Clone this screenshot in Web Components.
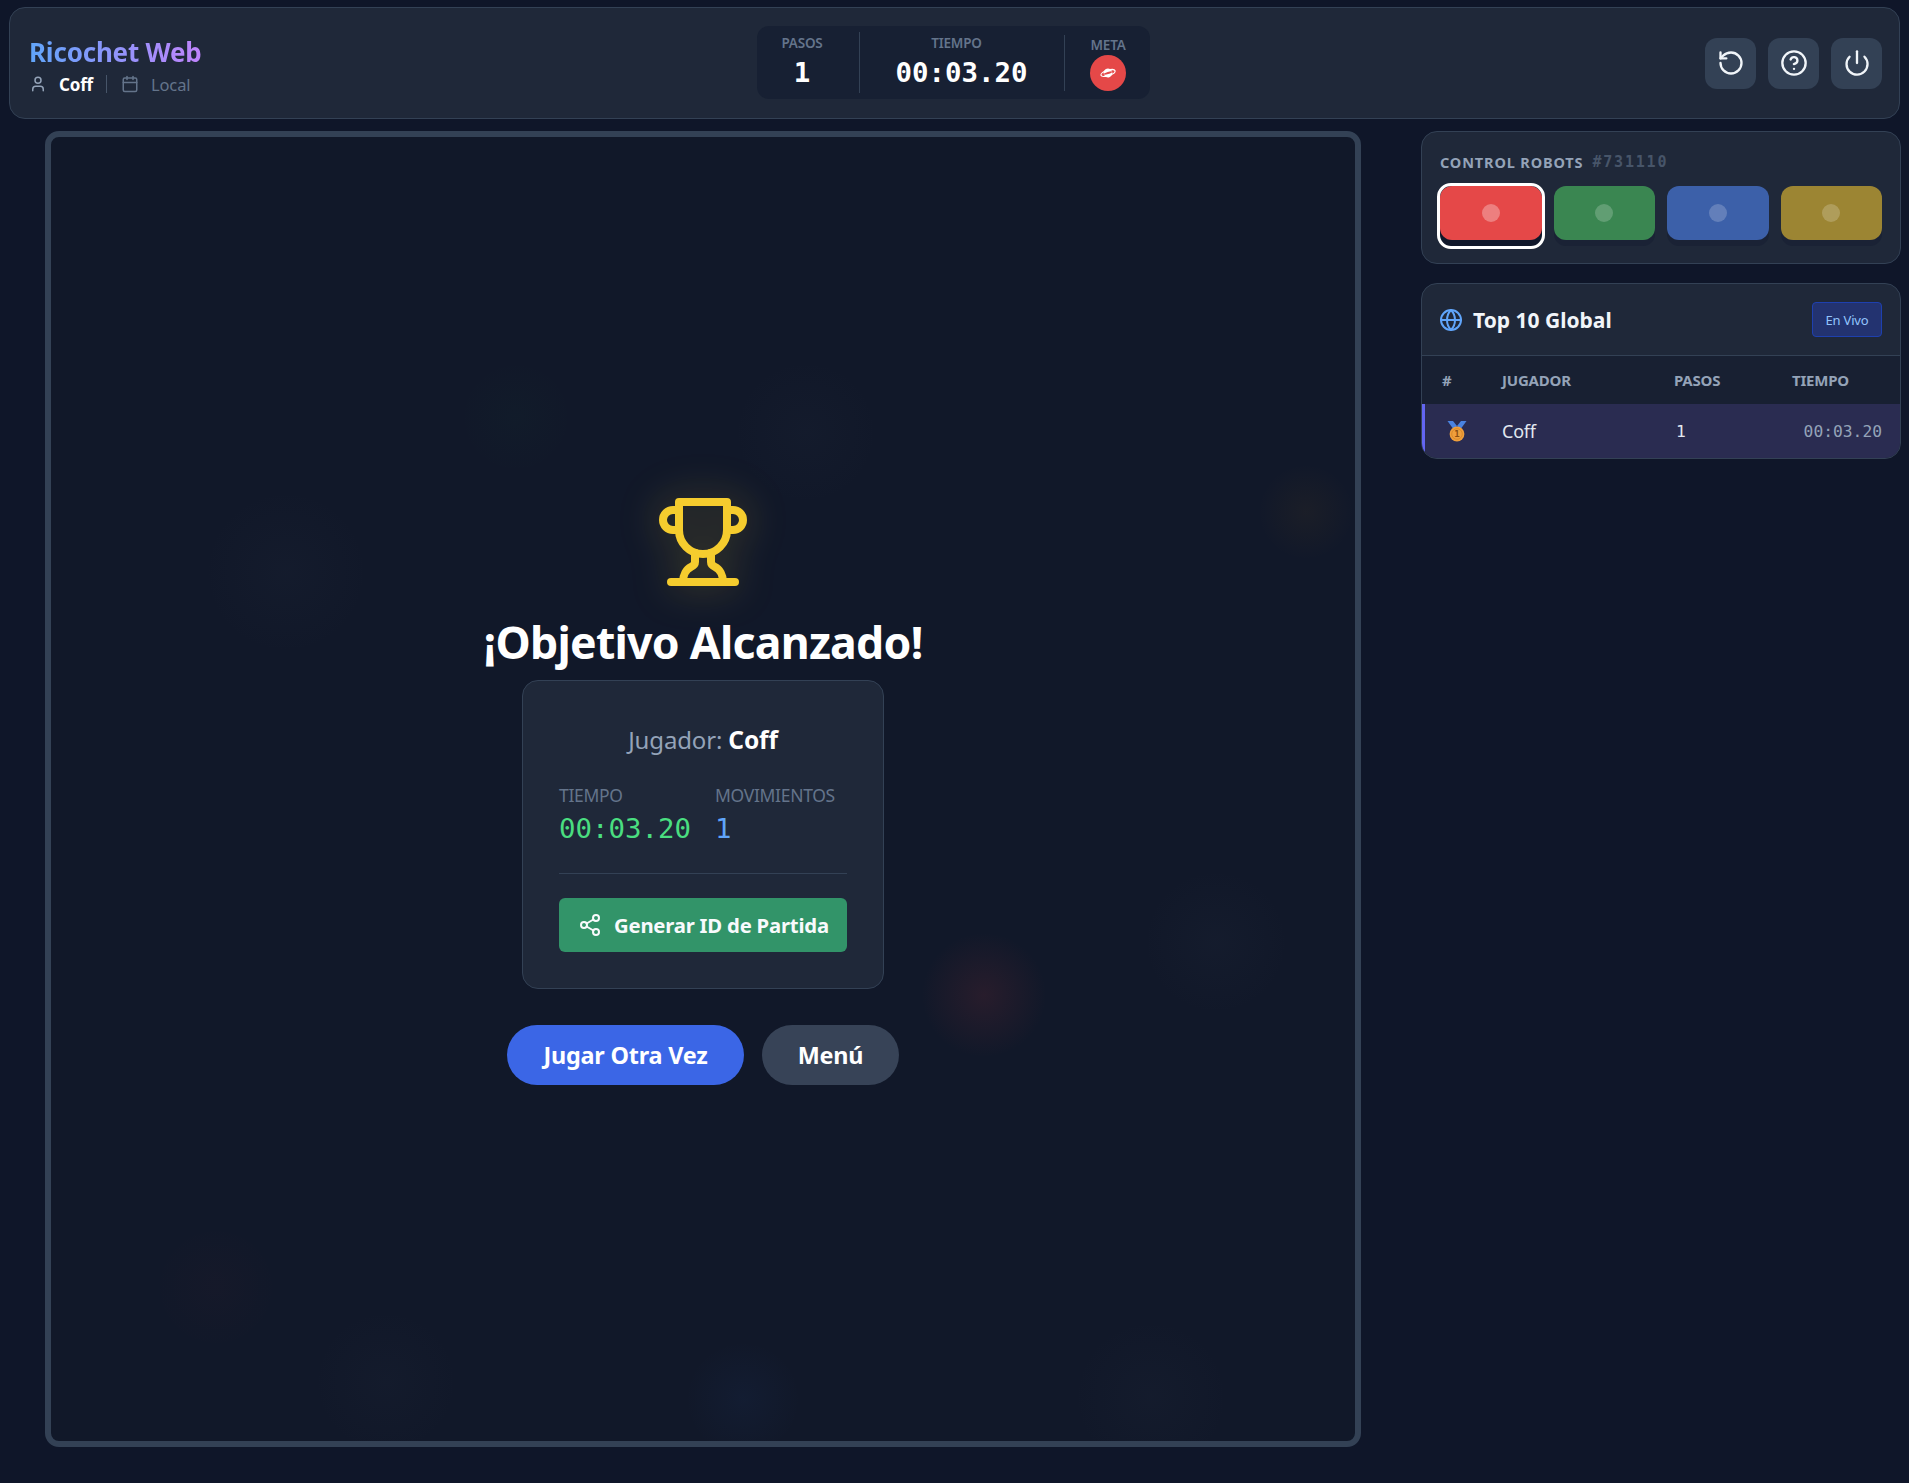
<!DOCTYPE html>
<html lang="es"><head><meta charset="utf-8"><title>Ricochet Web</title>
<style>
html,body{margin:0;height:100%;background:#0f1629;color:#fff;font-family:"Noto Sans",sans-serif}
body{height:1483px;overflow:hidden}
</style></head><body>
<rw-app></rw-app>
<script>
const ic=(d,s=24,c='currentColor',w=2)=>`<svg xmlns="http://www.w3.org/2000/svg" width="${s}" height="${s}" viewBox="0 0 24 24" fill="none" stroke="${c}" stroke-width="${w}" stroke-linecap="round" stroke-linejoin="round">${d.map(p=>p.startsWith('<')?p:`<path d="${p}"/>`).join('')}</svg>`;
const I={
 user:['M19 21v-2a4 4 0 0 0-4-4H9a4 4 0 0 0-4 4v2','<circle cx="12" cy="7" r="4"/>'],
 cal:['M8 2v4','M16 2v4','<rect x="3" y="4" width="18" height="18" rx="2"/>','M3 10h18'],
 undo:['M3 12a9 9 0 1 0 9-9 9.75 9.75 0 0 0-6.74 2.74L3 8','M3 3v5h5'],
 help:['<circle cx="12" cy="12" r="10"/>','M9.09 9a3 3 0 0 1 5.83 1c0 2-3 3-3 3','M12 17h.01'],
 power:['M12 2v10','M18.4 6.6a9 9 0 1 1-12.77.04'],
 globe:['<circle cx="12" cy="12" r="10"/>','M12 2a14.5 14.5 0 0 0 0 20 14.5 14.5 0 0 0 0-20','M2 12h20'],
 share:['<circle cx="18" cy="5" r="3"/>','<circle cx="6" cy="12" r="3"/>','<circle cx="18" cy="19" r="3"/>','M8.59 13.51 15.42 17.49','M15.41 6.51 8.59 10.49'],
 trophy:['M6 9H4.5a2.5 2.5 0 0 1 0-5H6','M18 9h1.5a2.5 2.5 0 0 0 0-5H18','M4 22h16','M10 14.66V17c0 .55-.47.98-.97 1.21C7.85 18.75 7 20.24 7 22','M14 14.66V17c0 .55.47.98.97 1.21C16.15 18.75 17 20.24 17 22','M18 2H6v7a6 6 0 0 0 12 0V2Z']
};
const planet=`<svg width="18" height="18" viewBox="0 0 18 18" style="display:block"><g transform="rotate(-18 9 9)"><ellipse cx="9" cy="9" rx="7.400" ry="2.700" fill="none" stroke="#fff" stroke-width="1.200"/><circle cx="9" cy="9" r="4.400" fill="#fff"/><ellipse cx="9" cy="9" rx="4.400" ry="1" fill="#e54848"/></g></svg>`;
const def=(n,html)=>customElements.define(n,class extends HTMLElement{constructor(){super();this.attachShadow({mode:'open'}).innerHTML=html}});
const MONO='"DejaVu Sans Mono",monospace';
const PANEL='#1f2839';

def('rw-stat',`<style>
:host{display:flex;flex-direction:column;align-items:center;justify-content:center;box-sizing:border-box;height:100%}
.l{font-size:13.5px;font-weight:600;line-height:17px;color:#64748b;letter-spacing:-.2px;display:block}
</style><span class="l" part="l"><slot name="label"></slot></span><slot></slot>`);

def('rw-header',`<style>
:host{display:flex;align-items:center;justify-content:space-between;box-sizing:border-box;height:112px;margin:7px 9px 0 9px;padding:0 17px 0 19px;background:${PANEL};border:1px solid #334155;border-radius:16px;position:relative}
.left{margin-top:6px}
.t{font-size:26px;line-height:32px;font-weight:700;letter-spacing:-.2px;background:linear-gradient(90deg,#60a5fa,#c084fc);-webkit-background-clip:text;background-clip:text;color:transparent;width:max-content}
.s{display:flex;align-items:center;height:24px;margin-top:4px;font-size:16.5px;color:#64748b}
.s b{color:#fff;margin-left:12px;font-weight:700;font-size:17px;letter-spacing:-.2px}
.s i{font-style:normal;margin:0 14px 0 13px;width:1px;height:18px;background:#475569}
.s span.lc{margin-left:12px;color:#64748b;letter-spacing:-.1px}
.s svg{display:block;flex:none}
.stats{position:absolute;left:747px;top:18px;width:393px;height:73px;display:grid;grid-template-columns:102px 205px 86px;background:#172033;border-radius:12px}
.c{position:relative;height:73px}
.c+.c::before{content:"";position:absolute;left:0;width:1px;background:#334155;top:6px;bottom:6px}
.c:last-child::before{top:9px;bottom:8px}
.v{font:700 27.4px/34px ${MONO};color:#fff;margin-top:4px}
.pa rw-stat,.ti rw-stat{padding-bottom:1px}
.pa{padding-right:12px}
.ti span[slot]{position:relative;left:-5px}
.dot{width:36px;height:36px;margin-top:1px;border-radius:50%;background:#e54848;display:flex;align-items:center;justify-content:center}
.me rw-stat{padding:3px 0 0 2px}
.btns{display:flex;gap:12px}
.b{width:51px;height:51px;border-radius:12px;background:#334155;display:flex;align-items:center;justify-content:center;color:#f1f5f9}
</style>
<div class="left"><div class="t">Ricochet Web</div>
<div class="s">${ic(I.user,18,'#94a3b8')}<b>Coff</b><i></i>${ic(I.cal,18,'#64748b')}<span class="lc">Local</span></div></div>
<div class="stats">
<div class="c pa"><rw-stat><span slot="label">PASOS</span><div class="v">1</div></rw-stat></div>
<div class="c ti"><rw-stat><span slot="label">TIEMPO</span><div class="v">00:03.20</div></rw-stat></div>
<div class="c me"><rw-stat><span slot="label">META</span><div class="dot">${planet}</div></rw-stat></div>
</div>
<div class="btns"><div class="b">${ic(I.undo,28)}</div><div class="b">${ic(I.help,28)}</div><div class="b">${ic(I.power,28)}</div></div>`);

def('rw-blob',`<style>:host{position:absolute;display:block;border-radius:50%;width:var(--s,130px);height:var(--s,130px);left:var(--x);top:var(--y);background:radial-gradient(circle,var(--c) 0%,transparent 68%)}</style>`);

def('rw-victory',`<style>
:host{display:flex;flex-direction:column;align-items:center;position:relative}
.tr{width:96px;height:96px;display:block;position:relative;margin-top:1px}
.tr svg{display:block;filter:drop-shadow(0 0 20px rgba(245,204,46,.3))}
h1{margin:22px 0 0;font-size:44.6px;line-height:59px;font-weight:700;color:#fff;white-space:nowrap;letter-spacing:-.75px}
.card{box-sizing:border-box;width:362px;height:309px;margin-top:9px;padding:36px;background:${PANEL};border:1px solid #334155;border-radius:16px}
.j{font-size:24px;line-height:34px;text-align:center;color:#94a3b8;margin-top:6px;letter-spacing:-.15px}
.j b{color:#fff;font-weight:700;font-size:24.5px}
.g{display:flex;gap:24px;margin-top:26px}
.lb{font-size:17.5px;line-height:24px;color:#64748b;letter-spacing:-.3px}
.val{font:27.4px/36px ${MONO};color:#4ade80;margin-top:4px}
.blue{color:#60a5fa}
hr{border:0;height:1px;background:#334155;margin:26px 0 24px}
.gen{height:54px;background:#329469;border-radius:6px;display:flex;align-items:center;padding-left:19px;gap:12px;font-size:20.300px;font-weight:700;color:#f8fafc;letter-spacing:-.2px;white-space:nowrap}
.gen svg{display:block;flex:none}
.acts{display:flex;gap:18px;margin-top:36px}
.p{height:60px;border-radius:30px;display:flex;align-items:center;justify-content:center;font-size:23.400px;font-weight:700;color:#fff;box-sizing:border-box;letter-spacing:-.2px}
.p1{width:237px;background:#3b66e6}
.p2{width:137px;background:#374357}
</style>
<div class="tr">${ic(I.trophy,96,'#f5cc2e',2)}</div>
<h1>¡Objetivo Alcanzado!</h1>
<div class="card">
<div class="j">Jugador: <b>Coff</b></div>
<div class="g"><div><div class="lb">TIEMPO</div><div class="val">00:03.20</div></div><div><div class="lb">MOVIMIENTOS</div><div class="val blue">1</div></div></div>
<hr>
<div class="gen">${ic(I.share,24,'#f8fafc')}<span>Generar ID de Partida</span></div>
</div>
<div class="acts"><div class="p p1">Jugar Otra Vez</div><div class="p p2">Menú</div></div>`);

def('rw-board',`<style>
:host{display:flex;align-items:center;justify-content:center;box-sizing:border-box;width:1316px;height:1316px;border:6px solid #334155;border-radius:14px;background:#111829;position:relative;overflow:hidden}
.w{position:relative}
</style><slot name="bg"></slot><div class="w"><slot></slot></div>`);

def('rw-robots',`<style>
:host{display:block;box-sizing:border-box;height:133px;padding:18px 18px 0 18px;background:${PANEL};border:1px solid #334155;border-radius:16px}
.h{display:flex;align-items:center;height:24px;font-size:14.5px;font-weight:700;color:#94a3b8;letter-spacing:.85px}
.h span{font:700 15px ${MONO};color:#475569;margin-left:9px;letter-spacing:1.800px}
.g{display:grid;grid-template-columns:repeat(4,1fr);gap:12px;margin-top:12px}
.r{height:54px;border-radius:12px;display:flex;align-items:center;justify-content:center;box-shadow:0 6px 0 #1a2235;position:relative}
.r::after{content:"";width:18px;height:18px;border-radius:50%;background:rgba(255,255,255,.2)}
.a{box-shadow:0 6px 0 #0f172a;background:#e54848}
.a::after{background:rgba(255,255,255,.3)}
.a::before{content:"";position:absolute;left:-3px;right:-3px;top:-3px;bottom:-9px;border:3px solid #fff;border-radius:14px}
</style><div class="h">CONTROL ROBOTS<span>#731110</span></div>
<div class="g"><div class="r a"></div><div class="r" style="background:#3a8651"></div><div class="r" style="background:#3c60a9"></div><div class="r" style="background:#9c8533"></div></div>`);

def('rw-ranking',`<style>
:host{display:block;box-sizing:border-box;margin-top:19px;height:176px;background:${PANEL};border:1px solid #334155;border-radius:16px;overflow:hidden}
.h{display:flex;align-items:center;height:72px;padding:0 18px 0 17px;border-bottom:1px solid #334155;box-sizing:border-box}
.h svg{display:block}
.h b{font-size:21px;font-weight:700;color:#f1f5f9;margin-left:10px}
.bd{margin-left:auto;width:70px;height:35px;box-sizing:border-box;border:1px solid #1e40af;border-radius:4px;background:#233370;color:#93c5fd;font-size:13px;display:flex;align-items:center;justify-content:center;letter-spacing:-.2px}
.row{display:grid;grid-template-columns:60px 172px 118px 1fr;align-items:center}
.th{height:48px;background:#182032;font-size:15px;font-weight:700;color:#94a3b8;padding-left:20px;letter-spacing:-.2px}
.tr{height:54px;background:#2a2c51;border-left:3px solid #6366f1;padding-left:17px;box-sizing:border-box;color:#e2e8f0}
.tr .n{font-size:18px;letter-spacing:-.2px}
.tr .p{font:16.300px ${MONO};padding-left:2px}
.tr .t{font:16.300px ${MONO};color:#94a3b8;text-align:right;padding-right:18px}
svg text{font:700 9px ${MONO}}
</style>
<div class="h">${ic(I.globe,24,'#60a5fa')}<b>Top 10 Global</b><span class="bd">En Vivo</span></div>
<div class="row th"><div>#</div><div>JUGADOR</div><div>PASOS</div><div>TIEMPO</div></div>
<div class="row tr"><div><svg width="22" height="22" viewBox="0 0 22 22" style="display:block;margin-left:4px"><path d="M1.500 1h5.500l4 5-3 4zM20.500 1H15l-4 5 3 4z" fill="#4a83e0"/><circle cx="11" cy="14" r="7.400" fill="#ef9f3c"/><circle cx="11" cy="14" r="5.300" fill="none" stroke="#d98a2a"/><text x="11" y="17.200" text-anchor="middle" fill="#8a4f12">1</text></svg></div><div class="n">Coff</div><div class="p">1</div><div class="t">00:03.20</div></div>`);

def('rw-app',`<style>
:host{display:block}
main{display:grid;grid-template-columns:1406px 480px;column-gap:15px;margin-top:12px}
.l{display:flex;justify-content:center}
</style>
<rw-header></rw-header>
<main><div class="l"><rw-board>
<rw-blob slot="bg" style="--x:868px;--y:793px;--s:130px;--c:rgba(239,68,68,.10)"></rw-blob>
<rw-blob slot="bg" style="--x:1205px;--y:325px;--s:100px;--c:rgba(245,158,11,.045)"></rw-blob>
<rw-blob slot="bg" style="--x:632px;--y:1202px;--s:120px;--c:rgba(59,130,246,.045)"></rw-blob>
<rw-blob slot="bg" style="--x:100px;--y:1085px;--s:130px;--c:rgba(239,68,68,.02)"></rw-blob>
<rw-blob slot="bg" style="--x:150px;--y:350px;--s:170px;--c:rgba(100,116,139,.035)"></rw-blob>
<rw-blob slot="bg" style="--x:1020px;--y:1180px;--s:160px;--c:rgba(100,116,139,.035)"></rw-blob>
<rw-blob slot="bg" style="--x:405px;--y:220px;--s:120px;--c:rgba(34,197,94,.02)"></rw-blob>
<rw-blob slot="bg" style="--x:1090px;--y:730px;--s:150px;--c:rgba(100,116,139,.04)"></rw-blob>
<rw-blob slot="bg" style="--x:260px;--y:1170px;--s:150px;--c:rgba(100,116,139,.03)"></rw-blob>
<rw-blob slot="bg" style="--x:680px;--y:220px;--s:150px;--c:rgba(100,116,139,.03)"></rw-blob>
<rw-victory></rw-victory></rw-board></div>
<aside><rw-robots></rw-robots><rw-ranking></rw-ranking></aside></main>`);
</script>
</body></html>
